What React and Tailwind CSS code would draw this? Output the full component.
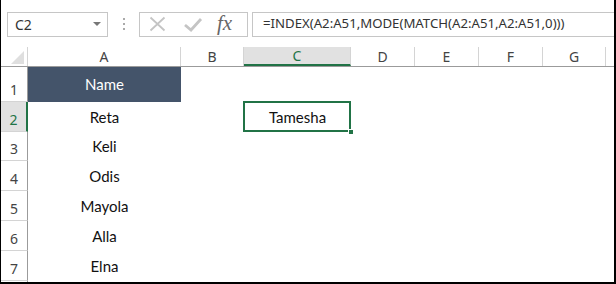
import React from 'react';

const COLS = [
  { key: 'A', w: 'w-[153px]' },
  { key: 'B', w: 'w-[63px]' },
  { key: 'C', w: 'w-[107px]' },
  { key: 'D', w: 'w-[64px]' },
  { key: 'E', w: 'w-[64px]' },
  { key: 'F', w: 'w-[64px]' },
  { key: 'G', w: 'w-[63px]' },
];

const ROWS = [
  { n: 1, h: 'h-[35px]', name: 'Name' },
  { n: 2, h: 'h-[30px]', name: 'Reta' },
  { n: 3, h: 'h-[29px]', name: 'Keli' },
  { n: 4, h: 'h-[30px]', name: 'Odis' },
  { n: 5, h: 'h-[30px]', name: 'Mayola' },
  { n: 6, h: 'h-[30px]', name: 'Alla' },
  { n: 7, h: 'h-[30px]', name: 'Elna' },
];

const ui = { fontFamily: '"Noto Sans", "Open Sans", sans-serif' };
const cell = { fontFamily: 'Lato, "Open Sans", sans-serif' };

function FormulaBar() {
  return (
    <div className="flex items-center h-[47px] pl-[6px] pt-[1px]">
      <div className="flex items-center justify-between w-[101px] h-[25px] border border-[#c6c6c6] pl-[7px] pr-[6px]">
        <span className="text-[14px] text-[#333]" style={ui}>C2</span>
        <span className="w-0 h-0 border-l-[4px] border-r-[4px] border-t-[4px] border-l-transparent border-r-transparent border-t-[#777]" />
      </div>
      <div className="flex flex-col gap-[3px] w-[31px] items-center">
        <span className="w-[2px] h-[2px] bg-[#aaa]" />
        <span className="w-[2px] h-[2px] bg-[#aaa]" />
        <span className="w-[2px] h-[2px] bg-[#aaa]" />
      </div>
      <div className="flex items-center w-[109px] h-[25px] border border-[#c6c6c6] pl-[9px]">
        <svg width="17" height="16" viewBox="0 0 17 16" className="mr-[17px]">
          <path d="M1.5 1.5 L15.5 14.5 M15.5 1.5 L1.5 14.5" stroke="#c4c4c4" strokeWidth="1.8" fill="none" />
        </svg>
        <svg width="20" height="16" viewBox="0 0 20 16" className="mr-[14px]">
          <path d="M2 9 L8 14 L18 3" stroke="#c4c4c4" strokeWidth="2.8" fill="none" />
        </svg>
        <span className="text-[21px] italic text-[#666] leading-none -mt-[2px]" style={{ fontFamily: '"Liberation Serif", serif' }}>fx</span>
      </div>
      <div className="flex items-center flex-1 h-[25px] border-l border-t border-b border-[#c6c6c6] ml-[4px] pl-[10px]">
        <span className="text-[13.2px] text-[#333]" style={ui}>=INDEX(A2:A51,MODE(MATCH(A2:A51,A2:A51,0)))</span>
      </div>
    </div>
  );
}

function ColumnHeader() {
  return (
    <div className="flex h-[20px] border-b border-[#9b9b9b]">
      <div className="w-[27px] flex items-end justify-end pr-[3px] pb-[2px] border-r border-[#d4d4d4]">
        <span className="w-0 h-0 border-l-[13px] border-b-[13px] border-l-transparent border-b-[#dfdfdf]" />
      </div>
      {COLS.map((c) => (
        <div
          key={c.key}
          className={`${c.w} flex items-center justify-center text-[14px] border-r border-[#d4d4d4] ${
            c.key === 'C' ? 'bg-[#e1e1e1] text-[#217346] border-b-2 border-b-[#217346]' : 'text-[#444]'
          }`}
          style={ui}
        >
          {c.key}
        </div>
      ))}
      <div className="flex-1" />
    </div>
  );
}

function Row({ row }) {
  const active = row.n === 2;
  return (
    <div className={`flex ${row.h}`}>
      <div
        className={`w-[27px] flex items-end justify-center pb-[1px] text-[14px] border-b border-[#d4d4d4] ${
          active ? 'bg-[#e1e1e1] text-[#217346] border-r-2 border-r-[#217346]' : 'text-[#444] border-r border-r-[#9b9b9b]'
        }`}
        style={ui}
      >
        {row.n}
      </div>
      <div
        className={`w-[153px] flex items-center justify-center text-[15px] ${
          row.n === 1 ? 'bg-[#44546a] text-white' : 'text-[#111]'
        }`}
        style={cell}
      >
        {row.name}
      </div>
      <div className="w-[63px]" />
      <div className="w-[107px] relative flex items-center justify-center text-[15px] text-[#111]" style={cell}>
        {active && (
          <>
            <div className="absolute -top-[1px] -left-[1px] right-0 bottom-0 border-2 border-[#217346]" />
            <div className="absolute -right-[3px] -bottom-[3px] w-[6px] h-[6px] bg-[#217346] border border-white" />
            <span className="relative">Tamesha</span>
          </>
        )}
      </div>
      <div className="flex-1" />
    </div>
  );
}

export default function App() {
  return (
    <div className="w-[616px] h-[284px] bg-white border-l border-r-2 border-b-2 border-black overflow-hidden">
      <FormulaBar />
      <ColumnHeader />
      {ROWS.map((r) => (
        <Row key={r.n} row={r} />
      ))}
      <div className="w-[27px] h-[10px] border-r border-[#9b9b9b]" />
    </div>
  );
}
